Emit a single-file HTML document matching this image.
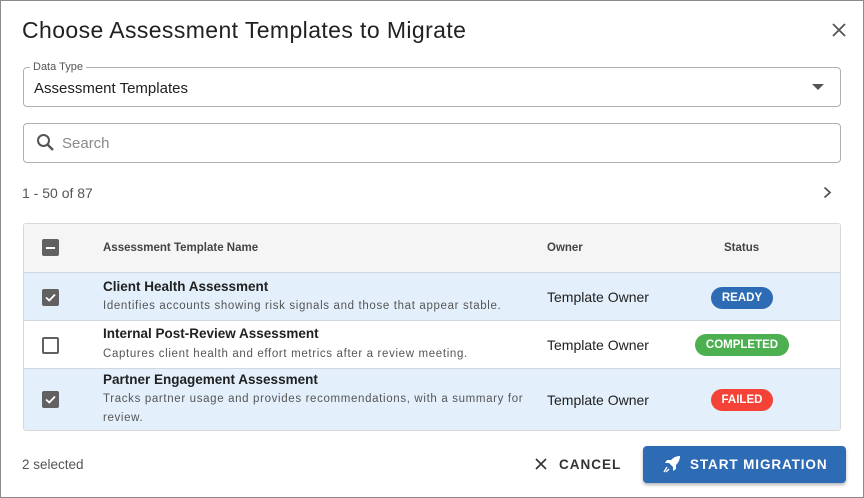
<!DOCTYPE html>
<html><head><style>
*{box-sizing:border-box;margin:0;padding:0}
body{width:864px;height:498px;background:#fff;font-family:"Liberation Sans",sans-serif;color:#212121;position:relative;overflow:hidden}
.frame{position:absolute;left:0;top:0;width:864px;height:498px;border:1px solid #8a8a8a;pointer-events:none}
.a{position:absolute}
.title{left:22px;top:17px;font-size:23px;letter-spacing:.4px;color:#212121}
.field{left:23px;width:818px;border:1px solid #b0b0b0;border-radius:4px}
.cb{width:17px;height:17px;border-radius:2px;background:#616161;position:absolute;left:42px}
.cbe{background:#fff;border:2px solid #616161}
.row{position:absolute;left:0;width:816px;border-top:1px solid #d0d7de}
.nm{position:absolute;left:79px;font-size:13.5px;font-weight:bold;color:#212121}
.ds{position:absolute;left:79px;font-size:11.5px;letter-spacing:.65px;color:#555;line-height:19px;width:430px}
.ow{position:absolute;left:523px;font-size:14px}
.pill{position:absolute;height:22px;border-radius:11px;color:#fff;font-size:11.5px;font-weight:bold;line-height:22px;text-align:center}
</style></head><body>
<div class="a title">Choose Assessment Templates to Migrate</div>
<svg class="a" style="left:832px;top:23px" width="14" height="14"><path d="M1 1L13 13M13 1L1 13" stroke="#555" stroke-width="1.8"/></svg>
<div class="a field" style="top:67px;height:40px"></div>
<div class="a" style="left:30px;top:61px;font-size:11px;color:#555;background:#fff;padding:0 3px">Data Type</div>
<div class="a" style="left:34px;top:80px;font-size:15px">Assessment Templates</div>
<svg class="a" style="left:812px;top:84px" width="12" height="7"><path d="M0 0L12 0L6 6Z" fill="#555"/></svg>
<div class="a field" style="top:123px;height:40px"></div>
<svg class="a" style="left:36px;top:133px" width="19" height="19"><circle cx="7.5" cy="7.5" r="5.5" stroke="#555" stroke-width="2" fill="none"/><path d="M11.5 11.5L17 17" stroke="#555" stroke-width="2.4"/></svg>
<div class="a" style="left:62px;top:135px;font-size:15px;color:#888">Search</div>
<div class="a" style="left:22px;top:185px;font-size:14px;color:#555">1 - 50 of 87</div>
<svg class="a" style="left:823px;top:186px" width="9" height="13"><path d="M1.5 1.5L7 6.5L1.5 11.5" stroke="#555" stroke-width="1.8" fill="none"/></svg>
<div class="a" style="left:23px;top:223px;width:818px;height:208px;border:1px solid #d8d8d8;border-radius:3px;overflow:hidden">
<div class="row" style="top:0;height:48px;background:#f5f5f5;border-top:none">
 <div class="cb" style="left:18px;top:15px"><div style="position:absolute;left:4px;top:7.5px;width:9px;height:2px;background:#fff"></div></div>
 <div class="a" style="left:79px;top:18px;font-size:11.5px;font-weight:bold;color:#444">Assessment Template Name</div>
 <div class="a" style="left:523px;top:18px;font-size:11.5px;font-weight:bold;color:#444">Owner</div>
 <div class="a" style="left:700px;top:18px;font-size:11.5px;font-weight:bold;color:#444">Status</div>
</div>
<div class="row" style="top:48px;height:48px;background:#e3f0fc">
 <div class="cb" style="left:18px;top:16px"><svg width="17" height="17"><path d="M4 8.5L7.3 11.5L13 5.5" stroke="#fff" stroke-width="1.8" fill="none"/></svg></div>
 <div class="nm" style="top:6px">Client Health Assessment</div>
 <div class="ds" style="top:24px">Identifies accounts showing risk signals and those that appear stable.</div>
 <div class="ow" style="top:16px">Template Owner</div>
 <div class="pill" style="left:687px;top:14px;width:62px;background:#2d6bb5">READY</div>
</div>
<div class="row" style="top:96px;height:48px;background:#fff">
 <div class="cb cbe" style="left:18px;top:16px"></div>
 <div class="nm" style="top:5px">Internal Post-Review Assessment</div>
 <div class="ds" style="top:24px">Captures client health and effort metrics after a review meeting.</div>
 <div class="ow" style="top:16px">Template Owner</div>
 <div class="pill" style="left:671px;top:13px;width:94px;background:#4caf50">COMPLETED</div>
</div>
<div class="row" style="top:144px;height:64px;background:#e3f0fc">
 <div class="cb" style="left:18px;top:22px"><svg width="17" height="17"><path d="M4 8.5L7.3 11.5L13 5.5" stroke="#fff" stroke-width="1.8" fill="none"/></svg></div>
 <div class="nm" style="top:3px">Partner Engagement Assessment</div>
 <div class="ds" style="top:21px">Tracks partner usage and provides recommendations, with a summary for review.</div>
 <div class="ow" style="top:23px">Template Owner</div>
 <div class="pill" style="left:687px;top:20px;width:62px;background:#f44336">FAILED</div>
</div>
</div>
<div class="a" style="left:22px;top:457px;font-size:13.5px;color:#555">2 selected</div>
<svg class="a" style="left:535px;top:458px" width="12" height="12"><path d="M1 1L11 11M11 1L1 11" stroke="#333" stroke-width="1.6"/></svg>
<div class="a" style="left:559px;top:457px;font-size:13.5px;font-weight:bold;letter-spacing:1px;color:#333">CANCEL</div>
<div class="a" style="left:643px;top:446px;width:203px;height:37px;background:#2d6bb5;border-radius:4px;box-shadow:0 2px 3px rgba(0,0,0,.3)"></div>
<svg class="a" style="left:663px;top:455px" width="18" height="18"><path d="M17 1C12 1 8 4 6 8L10 12C14 10 17 6 17 1Z" fill="#fff"/><path d="M6 8L2 8L4 5L8 5ZM10 12L10 16L13 14L13 10Z" fill="#fff"/><path d="M4 12L1 17M6 14L3 17" stroke="#fff" stroke-width="1.3"/></svg>
<div class="a" style="left:690px;top:457px;font-size:13.5px;font-weight:bold;letter-spacing:.9px;color:#fff">START MIGRATION</div>
<div class="frame"></div>
</body></html>
